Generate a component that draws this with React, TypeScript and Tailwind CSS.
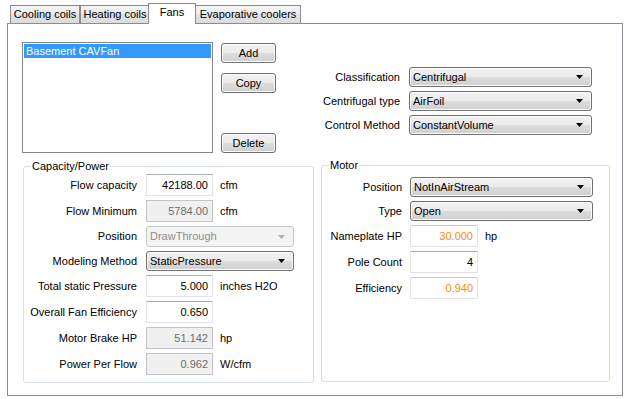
import React from "react";

const btnBg =
  "bg-[linear-gradient(#f2f2f2,#ebebeb_50%,#dddddd_50%,#cfcfcf)] border border-[#707070] rounded-[3px] shadow-[inset_0_0_0_1px_#fcfcfc]";

function Arrow({ color = "#000" }: { color?: string }) {
  return (
    <svg width="7" height="4" viewBox="0 0 7 4" className="shrink-0">
      <polygon points="0,0 7,0 3.5,4" fill={color} />
    </svg>
  );
}

function Combo({
  value,
  w,
  h = 20,
  disabled = false,
}: {
  value: string;
  w: number;
  h?: number;
  disabled?: boolean;
}) {
  return (
    <div
      style={{ width: w, height: h }}
      className={
        disabled
          ? "flex items-center justify-between rounded-[3px] border border-[#c5c8cc] bg-[#f4f4f4] pl-[3px] pr-[8px] text-[#8d8d8d]"
          : `flex items-center justify-between pl-[3px] pr-[8px] ${btnBg}`
      }
    >
      <span className="leading-[13px]">{value}</span>
      <Arrow color={disabled ? "#b0b0b0" : "#000"} />
    </div>
  );
}

function Field({
  value,
  w = 67,
  kind = "normal",
}: {
  value: string;
  w?: number;
  kind?: "normal" | "disabled" | "orange";
}) {
  const cls =
    kind === "disabled"
      ? "border-[#c2c4c8] bg-[#f0f0f0] text-[#6d6d6d]"
      : kind === "orange"
        ? "border-[#e2e3ea] border-t-[#c8cad0] bg-white text-[#ff8c00]"
        : "border-[#e2e3ea] border-t-[#abadb3] bg-white text-black";
  return (
    <div
      style={{ width: w }}
      className={`flex h-[22px] items-center justify-end border pr-[4px] leading-[13px] ${cls}`}
    >
      {value}
    </div>
  );
}

function Tab({ label, w, className = "" }: { label: string; w: number; className?: string }) {
  return (
    <div
      style={{ width: w }}
      className={`flex h-[18px] items-center justify-center border border-b-0 border-[#898c95] bg-[linear-gradient(#f3f3f3,#ececec_50%,#e2e2e2_50%,#dcdcdc)] leading-[13px] ${className}`}
    >
      {label}
    </div>
  );
}

function Row({
  label,
  labelW,
  gap,
  children,
  unit,
}: {
  label: string;
  labelW: number;
  gap: number;
  children: React.ReactNode;
  unit?: string;
}) {
  return (
    <div className="flex items-center">
      <div style={{ width: labelW }} className="shrink-0 text-right leading-[13px]">
        {label}
      </div>
      <div style={{ marginLeft: gap }}>{children}</div>
      {unit && <div className="ml-[7px] leading-[13px]">{unit}</div>}
    </div>
  );
}

export default function App() {
  return (
    <div className="h-[399px] w-[629px] overflow-hidden bg-white text-[11px] text-black font-['Liberation_Sans',Arial,sans-serif]">
      <div className="flex h-[23px] items-end pl-[10px]">
        <Tab label="Cooling coils" w={70} />
        <Tab label="Heating coils" w={70} />
        <div className="relative z-10 -mb-px -ml-[2px] flex h-[21px] w-[48px] items-start justify-center border border-b-0 border-[#898c95] bg-white pt-[2px] leading-[13px]">
          Fans
        </div>
        <Tab label="Evaporative coolers" w={106} className="-ml-px" />
      </div>

      <div className="ml-[7px] h-[373px] w-[616px] border border-[#898c95] bg-white">
        {/* top section */}
        <div className="flex h-[142px] pl-[14px] pt-[18px]">
          <div className="h-[111px] w-[191px] border border-[#828790] p-px">
            <div className="flex h-[14px] items-center bg-[#3399ff] pl-[2px] leading-[13px] text-white">
              Basement CAVFan
            </div>
          </div>
          <div className="ml-[8px] flex h-[111px] w-[55px] flex-col pt-px">
            <button className={`h-[20px] w-[55px] leading-[13px] ${btnBg}`}>Add</button>
            <button className={`mt-[10px] h-[20px] w-[55px] leading-[13px] ${btnBg}`}>Copy</button>
            <button className={`mt-auto h-[20px] w-[55px] leading-[13px] ${btnBg}`}>Delete</button>
          </div>
          <div className="mt-[25px] flex flex-col gap-[4px]">
            <Row label="Classification" labelW={124} gap={9}>
              <Combo value="Centrifugal" w={183} />
            </Row>
            <Row label="Centrifugal type" labelW={124} gap={9}>
              <Combo value="AirFoil" w={183} />
            </Row>
            <Row label="Control Method" labelW={124} gap={9}>
              <Combo value="ConstantVolume" w={183} />
            </Row>
          </div>
        </div>

        {/* groups */}
        <div className="flex items-start gap-[7px] pl-[15px]">
          <div className="relative h-[217px] w-[291px] rounded-[3px] border border-[#d5dfe5]">
            <span className="absolute -top-[7px] left-[7px] bg-white px-px leading-[13px]">
              Capacity/Power
            </span>
            <div className="flex flex-col gap-[4px] pt-[7px]">
              <Row label="Flow capacity" labelW={113} gap={9} unit="cfm">
                <Field value="42188.00" />
              </Row>
              <Row label="Flow Minimum" labelW={113} gap={9} unit="cfm">
                <Field value="5784.00" kind="disabled" />
              </Row>
              <Row label="Position" labelW={113} gap={9}>
                <Combo value="DrawThrough" w={148} h={21} disabled />
              </Row>
              <Row label="Modeling Method" labelW={113} gap={9}>
                <Combo value="StaticPressure" w={148} />
              </Row>
              <Row label="Total static Pressure" labelW={113} gap={9} unit="inches H2O">
                <Field value="5.000" />
              </Row>
              <Row label="Overall Fan Efficiency" labelW={113} gap={9}>
                <Field value="0.650" />
              </Row>
              <Row label="Motor Brake HP" labelW={113} gap={9} unit="hp">
                <Field value="51.142" kind="disabled" />
              </Row>
              <Row label="Power Per Flow" labelW={113} gap={9} unit="W/cfm">
                <Field value="0.962" kind="disabled" />
              </Row>
            </div>
          </div>

          <div className="relative -mt-px h-[217px] w-[289px] rounded-[3px] border border-[#d5dfe5]">
            <span className="absolute -top-[7px] left-[7px] bg-white px-px leading-[13px]">Motor</span>
            <div className="flex flex-col gap-[4px] pt-[11px]">
              <Row label="Position" labelW={80} gap={8}>
                <Combo value="NotInAirStream" w={183} />
              </Row>
              <Row label="Type" labelW={80} gap={8}>
                <Combo value="Open" w={183} />
              </Row>
              <Row label="Nameplate HP" labelW={80} gap={8} unit="hp">
                <Field value="30.000" w={68} kind="orange" />
              </Row>
              <Row label="Pole Count" labelW={80} gap={8}>
                <Field value="4" w={68} />
              </Row>
              <Row label="Efficiency" labelW={80} gap={8}>
                <Field value="0.940" w={68} kind="orange" />
              </Row>
            </div>
          </div>
        </div>
      </div>
    </div>
  );
}
